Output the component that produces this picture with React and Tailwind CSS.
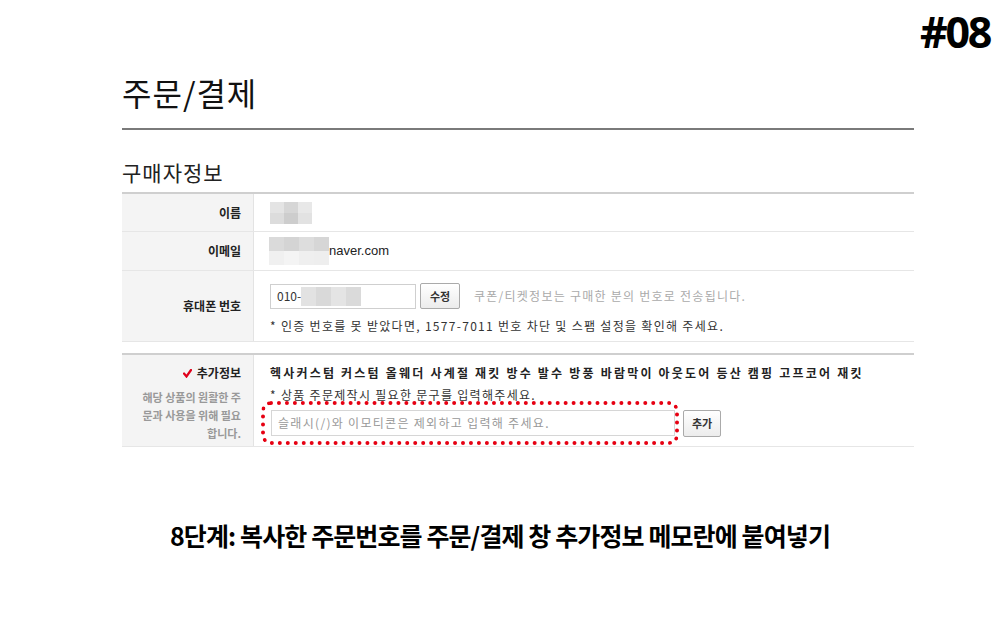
import React from 'react';

const kr = { fontFamily: '"Noto Sans CJK KR", "Noto Sans", sans-serif' };

// mosaic block used for masked personal info
function Mosaic({ cells, w, h }) {
  return (
    <div className="flex flex-col">
      {cells.map((row, i) => (
        <div key={i} className="flex">
          {row.map((c, j) => (
            <div key={j} style={{ width: w, height: h, background: c }} />
          ))}
        </div>
      ))}
    </div>
  );
}

function Label({ children }) {
  return (
    <div className="w-[132px] shrink-0 bg-[#f4f4f4] border-r border-[#e3e3e3] flex items-center justify-end pr-[12px] text-[12px] font-bold text-[#222]">
      {children}
    </div>
  );
}

export default function App() {
  return (
    <div className="w-[1000px] h-[617px] bg-white relative overflow-hidden" style={kr}>
      <div className="flex justify-end pr-[10px] pt-[10px] h-[60px]">
        <span className="text-[43px] font-bold text-black leading-none tracking-[-2.3px]" style={{ fontFamily: '"Open Sans", sans-serif' }}>#08</span>
      </div>

      <div className="ml-[122px] w-[792px]">
        <h1 className="text-[32px] text-[#111] leading-none pt-[16px] pb-[20px] tracking-[1px]">주문/결제</h1>
        <div className="h-[2px] bg-[#7a7a7a]" />

        <h2 className="text-[21px] text-[#222] leading-none pt-[32px] pb-[9px] tracking-[1px]">구매자정보</h2>

        <div className="border-t-2 border-[#cfcfcf]">
          <div className="flex h-[38px] border-b border-[#e6e6e6]">
            <Label>이름</Label>
            <div className="flex items-center pl-[16px]">
              <Mosaic w={14} h={11} cells={[['#e4e4e4', '#d6d6d6', '#e8e8e8'], ['#dcdcdc', '#cdcdcd', '#e2e2e2']]} />
            </div>
          </div>

          <div className="flex h-[39px] border-b border-[#e6e6e6]">
            <Label>이메일</Label>
            <div className="flex items-center pl-[15px]">
              <Mosaic w={15} h={14} cells={[['#dadada', '#d4d4d4', '#dddddd', '#d6d6d6'], ['#f0f0f0', '#f4f4f4', '#efefef', '#eeeeee']]} />
              <span className="text-[13px] text-[#222]" style={{ fontFamily: '"Liberation Sans", sans-serif' }}>naver.com</span>
            </div>
          </div>

          <div className="flex h-[71px] border-b border-[#e6e6e6]">
            <Label>휴대폰 번호</Label>
            <div className="flex flex-col pl-[16px] pt-[12px]">
              <div className="flex items-center">
                <div className="w-[146px] h-[25px] border border-[#cfcfcf] flex items-center pl-[6px] text-[12px] text-[#333]">
                  010-
                  <Mosaic w={15} h={19} cells={[['#e2e2e2', '#d9d9d9', '#e4e4e4', '#dadada']]} />
                </div>
                <button className="ml-[4px] w-[40px] h-[26px] border border-[#aaa] rounded-[2px] bg-gradient-to-b from-white to-[#ececec] text-[11px] font-bold text-[#333]">수정</button>
                <span className="ml-[14px] text-[12px] text-[#aaa] tracking-[1.25px]">쿠폰/티켓정보는 구매한 분의 번호로 전송됩니다.</span>
              </div>
              <div className="mt-[9px] text-[12px] leading-[16px] text-[#333] tracking-[1.3px]">* 인증 번호를 못 받았다면, 1577-7011 번호 차단 및 스팸 설정을 확인해 주세요.</div>
            </div>
          </div>
        </div>

        <div className="mt-[11px] border-t-2 border-[#cfcfcf] border-b border-b-[#e6e6e6] flex h-[94px]">
          <div className="w-[132px] shrink-0 bg-[#f4f4f4] border-r border-[#e3e3e3] flex flex-col items-end pr-[12px] pt-[9px]">
            <div className="flex items-center gap-[5px] text-[12px] font-bold text-[#222] leading-[18px]">
              <svg width="9" height="9" viewBox="0 0 9 9">
                <path d="M1 4.5 L3.5 7.5 L8 1" fill="none" stroke="#e0001b" strokeWidth="2.2" strokeLinecap="round" />
              </svg>
              추가정보
            </div>
            <div className="mt-[6px] text-[11px] font-bold text-[#999] text-right leading-[18px]">
              해당 상품의 원활한 주<br />문과 사용을 위해 필요<br />합니다.
            </div>
          </div>
          <div className="flex flex-col pl-[16px] pt-[9px]">
            <div className="text-[12px] leading-[18px] font-bold text-[#222] tracking-[2.2px]">헥사커스텀 커스텀 올웨더 사계절 재킷 방수 발수 방풍 바람막이 아웃도어 등산 캠핑 고프코어 재킷</div>
            <div className="text-[12px] text-[#333] leading-[16px] mt-[5px] tracking-[1.3px]">* 상품 주문제작시 필요한 문구를 입력해주세요.</div>
            <div className="flex items-center -ml-[9px] -mt-[2px]">
              <div className="border-[4px] border-dotted border-[#e60012] rounded-[10px] pl-[6px] py-[5px]">
                <div className="w-[404px] h-[26px] border border-[#d6d6d6] flex items-center pl-[6px] text-[12px] text-[#999] tracking-[1.3px]">
                  슬래시(/)와 이모티콘은 제외하고 입력해 주세요.
                </div>
              </div>
              <button className="ml-[4px] w-[38px] h-[27px] border border-[#aaa] rounded-[2px] bg-gradient-to-b from-white to-[#ececec] text-[11px] font-bold text-[#333]">추가</button>
            </div>
          </div>
        </div>
      </div>

      <div className="flex justify-center pt-[70px]">
        <span className="text-[25px] font-bold text-black tracking-[-0.9px]">8단계: 복사한 주문번호를 주문/결제 창 추가정보 메모란에 붙여넣기</span>
      </div>
    </div>
  );
}
